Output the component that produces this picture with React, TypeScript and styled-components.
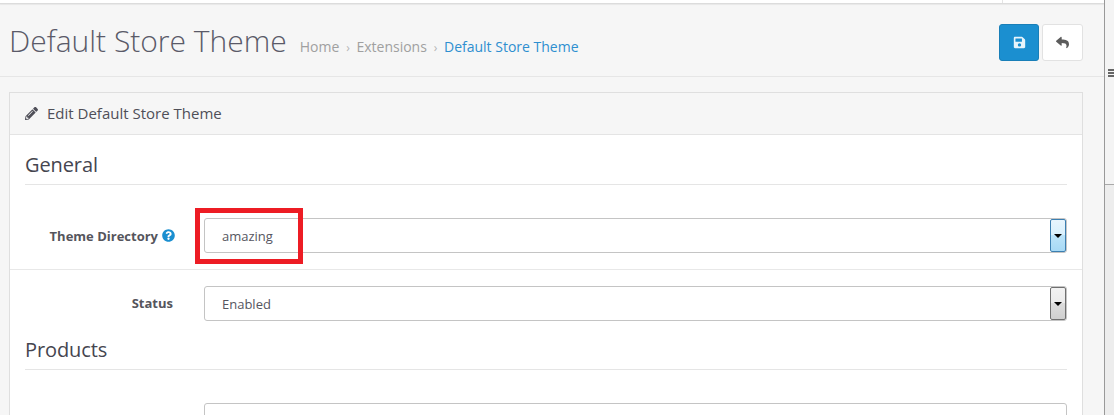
import React from "react";
import styled, { createGlobalStyle } from "styled-components";
import { FaPencilAlt, FaSave, FaReply, FaQuestionCircle } from "react-icons/fa";

const Global = createGlobalStyle`
  html, body { margin: 0; padding: 0; background: #f6f6f6; }
  body { font-family: "Open Sans", "Liberation Sans", sans-serif; font-size: 12px; color: #4b4b4b; }
`;

const Page = styled.div`
  width: 1114px; height: 415px; overflow: hidden; display: flex; background: #f6f6f6;
`;
const Main = styled.div`
  width: 1105px; flex: none; display: flex; flex-direction: column; border-right: 1px solid #999; box-sizing: border-box;
`;
const TopBar = styled.div`
  height: 3px; flex: none; background: #fff; border-bottom: 1px solid #dcdcdc; box-shadow: 0 1px 1px rgba(0,0,0,.06);
  display: flex; justify-content: flex-end; padding-right: 101px; box-sizing: content-box;
`;
const TopTick = styled.span`
  width: 1px; height: 3px; background: #e4e4e4;
`;
const Header = styled.div`
  height: 73px; flex: none; box-sizing: border-box; border-bottom: 1px solid #e6e6e6;
  display: flex; align-items: center; justify-content: space-between; padding: 0 21px 0 9px;
`;
const TitleRow = styled.div`
  display: flex; align-items: baseline; gap: 13px; margin-top: 1px;
`;
const Title = styled.h1`
  margin: 0; font-size: 30px; font-weight: 300; color: #5a5a68; line-height: 40px;
`;
const Crumbs = styled.div`
  display: flex; align-items: baseline; font-size: 14px; color: #a0a0a0;
`;
const Sep = styled.span`
  color: #b5b5b5; font-size: 12px; margin: 0 6.5px 0 7px;
`;
const Active = styled.span`
  color: #2e8fd0;
`;
const Buttons = styled.div`
  display: flex; gap: 3px; margin-top: 5px;
`;
const Btn = styled.div<{ $primary?: boolean }>`
  width: ${p => (p.$primary ? 40 : 41)}px; height: 37px; box-sizing: border-box; border-radius: 3px; display: flex; align-items: center; justify-content: center; font-size: 13px;
  background: ${p => (p.$primary ? "#1b8fd0" : "#fff")};
  border: 1px solid ${p => (p.$primary ? "#197fb8" : "#e2e2e2")};
  color: ${p => (p.$primary ? "#e8f4fb" : "#5c5c5c")};
`;
const Panel = styled.div`
  margin: 15px 21px 0 9px; background: #fff; border: 1px solid #dfdfdf; border-bottom: 0; flex: 1; min-height: 0;
`;
const PanelHead = styled.div`
  height: 42px; box-sizing: border-box; background: #f6f6f6; border-bottom: 1px solid #e4e4e4; padding: 0 15px;
  display: flex; align-items: center; gap: 9px; font-size: 15px; color: #4f4f58;
`;
const HeadText = styled.span`
  margin-top: -2px;
`;
const Legend = styled.div`
  margin: 0 15px; border-bottom: 1px solid #e5e5e5; font-size: 20px; letter-spacing: -0.1px; color: #45454f; box-sizing: border-box;
  height: 50px; padding-top: 9px; display: flex; align-items: center;
`;
const Row = styled.div<{ $h: number; $line?: boolean; $top: number }>`
  height: ${p => p.$h}px; box-sizing: border-box; padding-top: ${p => p.$top}px; display: flex; align-items: flex-start;
  border-bottom: ${p => (p.$line ? "1px solid #e8e8e8" : "0")};
`;
const Label = styled.label<{ $h?: number }>`
  width: 163px; flex: none; height: ${p => p.$h ?? 35}px; display: flex; align-items: center; justify-content: flex-end; gap: 4px;
  font-size: 13px; font-weight: 700; color: #55555c;
`;
const Help = styled.span`
  color: #1b8fd0; font-size: 13px; display: inline-flex; margin-right: -2px;
`;
const SelectBox = styled.div<{ $offset?: number }>`
  margin-left: ${p => p.$offset ?? 31}px; flex: none; width: 863px; height: 35px; box-sizing: border-box; border: 1px solid #c4c4c4; border-radius: 3px; background: #fff;
  display: flex; align-items: center; justify-content: space-between; padding-left: 17px; font-size: 13px; color: #555560;
`;
const Value = styled.span`
  padding-top: 1px;
`;
const Arrow = styled.div<{ $focus?: boolean }>`
  width: 16px; height: 33px; box-sizing: border-box; display: flex; align-items: center; justify-content: center; flex: none;
  border: 1px solid ${p => (p.$focus ? "#3c7fb1" : "#707070")};
  border-radius: 2px;
  background: ${p => p.$focus
    ? "linear-gradient(#e8f5fd 0, #d9f0fc 47%, #bde4f9 47%, #a7d9f5 100%)"
    : "linear-gradient(#f2f2f2 0, #ebebeb 47%, #dddddd 47%, #cfcfcf 100%)"};
  &::after { content: ""; border: 4px solid transparent; border-top: 4px solid #000; border-bottom: 0; width: 0; height: 0; }
`;
const Scrollbar = styled.div`
  width: 9px; flex: none; background: #ededed;
`;
const Thumb = styled.div`
  height: 185px; background: #f4f4f4; border-bottom: 1px solid #a9a9a9; box-sizing: border-box;
  display: flex; flex-direction: column; align-items: flex-end; gap: 1px; padding-top: 69px;
`;
const Grip = styled.span`
  width: 6px; height: 2px; background: #666;
`;
const Highlight = styled.div`
  position: absolute; left: 195px; top: 208px; width: 108px; height: 56px; box-sizing: border-box; border: 5px solid #ed1c24; pointer-events: none;
`;

export default function App() {
  return (
    <Page>
      <Global />
      <Main>
        <TopBar><TopTick /></TopBar>
        <Header>
          <TitleRow>
            <Title>Default Store Theme</Title>
            <Crumbs>
              Home<Sep>›</Sep>Extensions<Sep>›</Sep><Active>Default Store Theme</Active>
            </Crumbs>
          </TitleRow>
          <Buttons>
            <Btn $primary><FaSave /></Btn>
            <Btn><FaReply /></Btn>
          </Buttons>
        </Header>
        <Panel>
          <PanelHead><FaPencilAlt size={13} /><HeadText>Edit Default Store Theme</HeadText></PanelHead>
          <Legend>General</Legend>
          <Row $h={85} $top={33} $line>
            <Label>Theme Directory <Help><FaQuestionCircle /></Help></Label>
            <SelectBox><Value>amazing</Value><Arrow $focus /></SelectBox>
          </Row>
          <Row $h={50} $top={16}>
            <Label $h={33}>Status</Label>
            <SelectBox><Value>Enabled</Value><Arrow /></SelectBox>
          </Row>
          <Legend>Products</Legend>
          <Row $h={60} $top={33}>
            <SelectBox $offset={194} />
          </Row>
        </Panel>
      </Main>
      <Scrollbar>
        <Thumb><Grip /><Grip /><Grip /></Thumb>
      </Scrollbar>
      <Highlight />
    </Page>
  );
}
